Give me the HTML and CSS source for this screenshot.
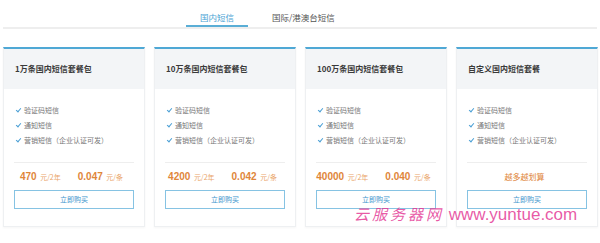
FILE: index.html
```html
<!DOCTYPE html>
<html>

<head>
    <meta charset="utf-8">
    <title>短信套餐包</title>
    <link rel="stylesheet" href="styles.css">
</head>

<body>
    <nav class="tabs">
        <a class="tab active" href="#none">国内短信</a>
        <a class="tab" href="#none">国际/港澳台短信</a>
    </nav>

    <section class="cards">
        <!-- 1万条 -->
        <div class="card">
            <div class="card-head">1万条国内短信套餐包</div>
            <div class="card-body">
                <ul class="features">
                    <li>验证码短信</li>
                    <li>通知短信</li>
                    <li>营销短信（企业认证可发）</li>
                </ul>
                <div class="price">
                    <span><b>470</b> 元/2年</span>
                    <span><b>0.047</b> 元/条</span>
                </div>
                <a class="buy" href="#none">立即购买</a>
            </div>
        </div>
        <!-- 10万条 -->
        <div class="card">
            <div class="card-head">10万条国内短信套餐包</div>
            <div class="card-body">
                <ul class="features">
                    <li>验证码短信</li>
                    <li>通知短信</li>
                    <li>营销短信（企业认证可发）</li>
                </ul>
                <div class="price">
                    <span><b>4200</b> 元/2年</span>
                    <span><b>0.042</b> 元/条</span>
                </div>
                <a class="buy" href="#none">立即购买</a>
            </div>
        </div>
        <!-- 100万条 -->
        <div class="card">
            <div class="card-head">100万条国内短信套餐包</div>
            <div class="card-body">
                <ul class="features">
                    <li>验证码短信</li>
                    <li>通知短信</li>
                    <li>营销短信（企业认证可发）</li>
                </ul>
                <div class="price">
                    <span><b>40000</b> 元/2年</span>
                    <span><b>0.040</b> 元/条</span>
                </div>
                <a class="buy" href="#none">立即购买</a>
            </div>
        </div>
        <!-- 自定义 -->
        <div class="card">
            <div class="card-head">自定义国内短信套餐</div>
            <div class="card-body">
                <ul class="features">
                    <li>验证码短信</li>
                    <li>通知短信</li>
                    <li>营销短信（企业认证可发）</li>
                </ul>
                <div class="price">
                    <span class="more">越多越划算</span>
                </div>
                <a class="buy" href="#none">立即购买</a>
            </div>
        </div>
    </section>

    <div class="watermark"><span class="wm-cn">云服务器网</span> www.yuntue.com</div>
</body>

</html>
```

FILE: styles.css
```css
body {
    margin: 0;
    width: 600px;
    height: 243px;
    background: #fff;
    font-family: "Liberation Sans", "Noto Sans CJK SC", sans-serif;
    position: relative;
    overflow: hidden;
}

.tabs {
    display: flex;
    margin: 0 3px;
    padding: 9px 0 0 183px;
    border-bottom: 2px solid #eeeeee;
    height: 18px;
}

.tab {
    display: block;
    font-family: "Noto Sans CJK SC", sans-serif;
    font-size: 8.5px;
    line-height: 16px;
    color: #555;
    text-decoration: none;
    padding: 0 14px;
    margin-right: 10px;
}

.tab.active {
    color: #4aa3d4;
    border-bottom: 2px solid #5aaed6;
}

.cards {
    display: grid;
    grid-template-columns: repeat(4, 1fr);
    gap: 9px;
    padding: 0 2px 0 3px;
    margin-top: 18px;
}

.card {
    border: 1px solid #eef0f2;
    border-top: 2px solid #4fa8d5;
    box-shadow: 0 1px 2px rgba(0, 0, 0, 0.04);
    height: 177px;
}

.card-head {
    background: #f3f5f7;
    height: 40px;
    line-height: 40px;
    padding-left: 11px;
    font-family: "Noto Sans CJK SC", sans-serif;
    font-size: 8px;
    font-weight: bold;
    color: #3a3a3a;
}

.card-body {
    padding: 0 10px;
}

.features {
    list-style: none;
    margin: 0;
    padding: 14px 0 0 2px;
    border-bottom: 1px solid #eeeeee;
    height: 59px;
}

.features li {
    font-family: "Noto Sans CJK SC", sans-serif;
    font-size: 7px;
    line-height: 15px;
    color: #777;
}

/* 작은 파란 체크 표시 */
.features li::before {
    content: "";
    display: inline-block;
    width: 2px;
    height: 4px;
    border-right: 1px solid #4a9fd5;
    border-bottom: 1px solid #4a9fd5;
    transform: rotate(40deg);
    margin: 0 4px 1px 1px;
}

.price {
    display: flex;
    justify-content: center;
    gap: 17px;
    height: 27px;
    line-height: 27px;
    padding-right: 5px;
    font-family: "Noto Sans CJK SC", sans-serif;
    font-size: 7px;
    color: #eaa66a;
}

.price b {
    font-family: "Liberation Sans", sans-serif;
    font-size: 10px;
    color: #e0863a;
    margin-right: 2px;
}

.price .more {
    font-size: 8px;
    color: #e0863a;
}

.buy {
    display: block;
    height: 17px;
    line-height: 17px;
    border: 1px solid #86c3e3;
    text-align: center;
    font-family: "Noto Sans CJK SC", sans-serif;
    font-size: 7px;
    color: #3b94cc;
    text-decoration: none;
}

.watermark {
    position: absolute;
    left: 354px;
    top: 207px;
    line-height: 13px;
    font-family: "Liberation Sans", sans-serif;
    font-size: 17px;
    color: rgba(228, 60, 150, 0.85);
    white-space: nowrap;
}

.wm-cn {
    font-family: "Noto Sans CJK SC", serif;
    font-style: italic;
    font-size: 15px;
    letter-spacing: 3px;
}
```
